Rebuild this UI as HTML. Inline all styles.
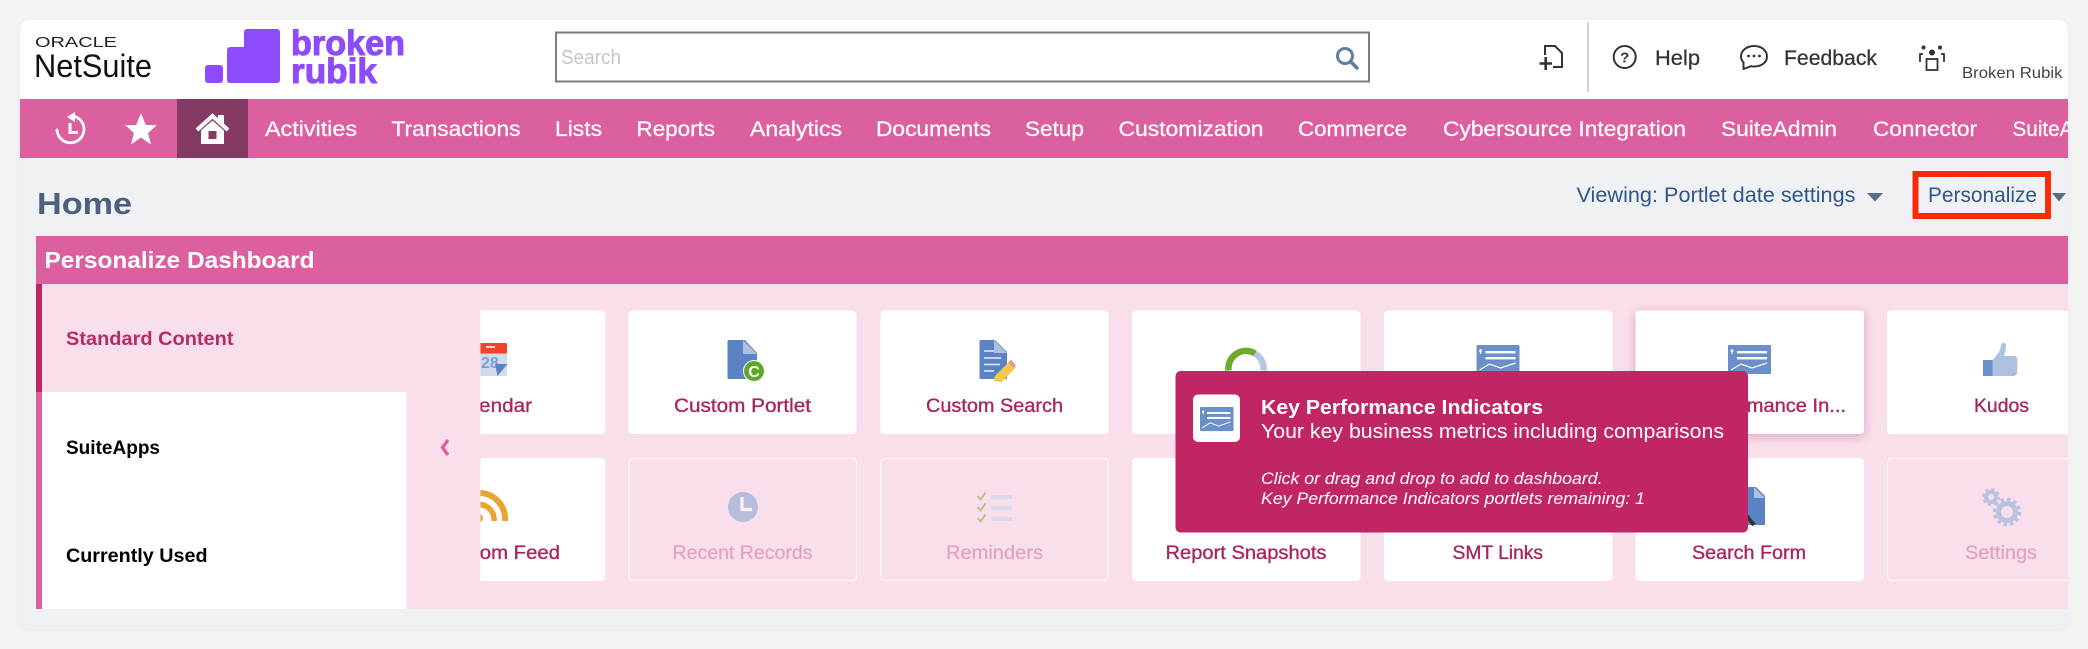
<!DOCTYPE html>
<html lang="en"><head><meta charset="utf-8"><title>NetSuite Personalize Dashboard</title>
<style>
html,body{margin:0;padding:0;background:#f4f4f5;width:2088px;height:649px;overflow:hidden}
svg{display:block;font-family:"Liberation Sans",Arial,sans-serif;filter:blur(.35px)}
.nav{font-size:21px;fill:#fff;stroke:#fff;stroke-width:.25}
.lb{font-size:19.5px;fill:#aa2460;stroke:#aa2460;stroke-width:.35;text-anchor:start}
.dis{font-size:19.5px;fill:#e2a3c0;stroke:#e2a3c0;stroke-width:.25}
.tab{font-size:19px;font-weight:bold}
.top{font-size:21.5px;fill:#333;stroke:#333;stroke-width:.25}
.view{font-size:21.5px;fill:#2f5787}
.tip{fill:#fff}
</style></head><body>
<svg width="2088" height="649" viewBox="0 0 2088 649" xmlns="http://www.w3.org/2000/svg">
<defs>
<clipPath id="cardClip"><rect x="20" y="20" width="2048" height="609" rx="10"/></clipPath>
<clipPath id="slide"><rect x="480.5" y="290" width="1587.5" height="310"/></clipPath>
<filter id="sh" x="-10%" y="-15%" width="120%" height="130%"><feDropShadow dx="0" dy="2" stdDeviation="5" flood-color="#b02a66" flood-opacity=".35"/></filter>
<filter id="outer" x="-2%" y="-5%" width="104%" height="110%"><feDropShadow dx="0" dy="1" stdDeviation="3" flood-color="#000" flood-opacity=".05"/></filter>
<g id="kpi">
<rect x="0" y="0" width="43" height="29" rx="1" fill="#6b90c9"/>
<rect x="9" y="6" width="30" height="2.4" fill="#fff"/><rect x="9" y="12" width="30" height="2.4" fill="#fff"/>
<path d="M4 9V5M2.6 6.4 4 4.6 5.4 6.4" stroke="#fff" stroke-width="1.2" fill="none"/>
<path d="M3 25 13 19 24 23 39 18" stroke="#fff" stroke-width="1.2" fill="none"/>
</g>
</defs>
<rect width="2088" height="649" fill="#f4f4f5"/>
<rect x="20" y="20" width="2048" height="609" rx="10" fill="#eff1f4" filter="url(#outer)"/>
<g clip-path="url(#cardClip)">
<!-- top bar -->
<rect x="20" y="20" width="2048" height="79" fill="#fff"/>
<text x="35" y="47" font-size="14.5" fill="#222" textLength="82" lengthAdjust="spacingAndGlyphs">ORACLE</text>
<text x="34" y="77" font-size="32.5" fill="#111" textLength="118" lengthAdjust="spacingAndGlyphs">NetSuite</text>
<!-- broken rubik logo -->
<rect x="205" y="65" width="18" height="18" rx="3" fill="#8d4bfb"/>
<path d="M227 50a3 3 0 0 1 3-3H244V32a3 3 0 0 1 3-3H277a3 3 0 0 1 3 3V80a3 3 0 0 1-3 3H230a3 3 0 0 1-3-3Z" fill="#8d4bfb"/>
<text x="291" y="55" font-size="35.500" font-weight="bold" fill="#8d4bfb" stroke="#8d4bfb" stroke-width="1" textLength="114" lengthAdjust="spacingAndGlyphs">broken</text>
<text x="291" y="83" font-size="35.500" font-weight="bold" fill="#8d4bfb" stroke="#8d4bfb" stroke-width="1" textLength="86" lengthAdjust="spacingAndGlyphs">rubik</text>
<!-- search -->
<rect x="556" y="32.5" width="813" height="49" fill="#fff" stroke="#7d7d7d" stroke-width="2"/>
<text x="561" y="64" font-size="20.500" fill="#c6c6c6" textLength="60" lengthAdjust="spacingAndGlyphs">Search</text>
<circle cx="1345" cy="56" r="7.5" fill="none" stroke="#5f7f9f" stroke-width="3"/>
<path d="M1350.5 61.5 1357 68" stroke="#5f7f9f" stroke-width="3.6" stroke-linecap="round"/>
<!-- right icons -->
<path d="M1545 55V46H1555L1562 53V67H1553" fill="none" stroke="#333" stroke-width="2"/>
<path d="M1539.500 63.500H1552M1545.700 57V70" stroke="#333" stroke-width="2.600" fill="none"/>
<rect x="1587" y="22" width="2" height="70" fill="#d2d2d2"/>
<circle cx="1624.700" cy="57" r="11" fill="none" stroke="#333" stroke-width="2"/>
<text x="1624.700" y="62.500" font-size="15" font-weight="bold" fill="#333" text-anchor="middle">?</text>
<text class="top" x="1655" y="65" textLength="45" lengthAdjust="spacingAndGlyphs">Help</text>
<path d="M1743.500 69V62.500C1741.600 60.500 1741 58.500 1741 56.500C1741 50.500 1747 46 1754 46C1761.500 46 1767 50.500 1767 56.500C1767 62.500 1761.500 66.500 1754 66.500C1753 66.500 1752 66.400 1751 66.200Z" fill="none" stroke="#333" stroke-width="2" stroke-linejoin="round"/>
<circle cx="1748.500" cy="56" r="1.400" fill="#333"/><circle cx="1754" cy="56" r="1.400" fill="#333"/><circle cx="1759.500" cy="56" r="1.400" fill="#333"/>
<text class="top" x="1784" y="65" textLength="93" lengthAdjust="spacingAndGlyphs">Feedback</text>
<circle cx="1923.500" cy="47.500" r="2" fill="#333"/><circle cx="1940" cy="47.500" r="2" fill="#333"/><circle cx="1932" cy="52.500" r="3" fill="#333"/>
<path d="M1923 54H1920V62M1941 54H1944V62" fill="none" stroke="#333" stroke-width="1.800"/>
<rect x="1926.500" y="59" width="11" height="11" fill="none" stroke="#333" stroke-width="1.800"/>
<text x="1962" y="78" font-size="16" fill="#444" textLength="100.500" lengthAdjust="spacingAndGlyphs">Broken Rubik</text>
<!-- nav -->
<rect x="20" y="99" width="2048" height="59" fill="#dc609f"/>
<rect x="177" y="99" width="71" height="59" fill="#843a62"/>
<path d="M73 116A13.500 13.500 0 1 1 57 130" fill="none" stroke="#fff" stroke-width="2.800" stroke-linecap="round"/>
<path d="M67 117 75 112V122Z" fill="#fff"/>
<path d="M70 123V132.500H78" fill="none" stroke="#fff" stroke-width="3"/>
<path d="M141 113 145.800 125H157L148 133 151 144.500 141 137.500 131 144.500 134 133 125 125H136.200Z" fill="#fff"/>
<path d="M197 130 212.500 116 228 130" fill="none" stroke="#fff" stroke-width="4"/>
<path d="M218 115H224V124L218 119Z" fill="#fff"/>
<path d="M201 130.500 212.500 120.500 224 130.500V144H201Z" fill="#fff"/>
<rect x="208.500" y="131" width="8" height="8" fill="#843a62"/>
<g class="nav">
<text x="265" y="136" textLength="92" lengthAdjust="spacingAndGlyphs">Activities</text>
<text x="391.500" y="136" textLength="129" lengthAdjust="spacingAndGlyphs">Transactions</text>
<text x="555" y="136" textLength="47" lengthAdjust="spacingAndGlyphs">Lists</text>
<text x="636.500" y="136" textLength="78.500" lengthAdjust="spacingAndGlyphs">Reports</text>
<text x="750" y="136" textLength="92" lengthAdjust="spacingAndGlyphs">Analytics</text>
<text x="876" y="136" textLength="115" lengthAdjust="spacingAndGlyphs">Documents</text>
<text x="1025" y="136" textLength="59" lengthAdjust="spacingAndGlyphs">Setup</text>
<text x="1118.500" y="136" textLength="145" lengthAdjust="spacingAndGlyphs">Customization</text>
<text x="1298" y="136" textLength="109" lengthAdjust="spacingAndGlyphs">Commerce</text>
<text x="1443" y="136" textLength="243" lengthAdjust="spacingAndGlyphs">Cybersource Integration</text>
<text x="1721" y="136" textLength="116" lengthAdjust="spacingAndGlyphs">SuiteAdmin</text>
<text x="1873" y="136" textLength="104" lengthAdjust="spacingAndGlyphs">Connector</text>
<text x="2012.500" y="136" textLength="130" lengthAdjust="spacingAndGlyphs">SuiteAnalytics</text>
</g>
<!-- page head -->
<text x="37" y="214" font-size="31" font-weight="bold" fill="#4c5f7e" textLength="95" lengthAdjust="spacingAndGlyphs">Home</text>
<text class="view" x="1576.500" y="202" textLength="279" lengthAdjust="spacingAndGlyphs">Viewing: Portlet date settings</text>
<path d="M1867 193H1883L1875 201.500Z" fill="#5a6b85"/>
<rect x="1915.500" y="174" width="132.500" height="42" fill="none" stroke="#fa2a08" stroke-width="6"/>
<text class="view" x="1928" y="202" textLength="109" lengthAdjust="spacingAndGlyphs">Personalize</text>
<path d="M2052 193H2066L2059 201.500Z" fill="#5a6b85"/>
<!-- portlet -->
<rect x="36" y="236" width="2032" height="48" fill="#dc609f"/>
<text x="44.500" y="268" font-size="23" font-weight="bold" fill="#fff" textLength="270" lengthAdjust="spacingAndGlyphs">Personalize Dashboard</text>
<rect x="36" y="284" width="2032" height="325" fill="#f8dfeb"/>
<rect x="36" y="284" width="6" height="108" fill="#c0245f"/>
<rect x="36" y="392" width="6" height="217" fill="#dc609f"/>
<rect x="42" y="392" width="364.500" height="217" fill="#fff"/>
<text class="tab" x="66" y="345" fill="#b92a66" textLength="167.500" lengthAdjust="spacingAndGlyphs">Standard Content</text>
<text class="tab" x="66" y="454" fill="#000" textLength="94" lengthAdjust="spacingAndGlyphs">SuiteApps</text>
<text class="tab" x="66" y="562" fill="#000" textLength="141.500" lengthAdjust="spacingAndGlyphs">Currently Used</text>
<path d="M448 440 442.500 447.500 448 455" fill="none" stroke="#dc609f" stroke-width="3.400"/>
<g clip-path="url(#slide)">
<!-- cards row 1 -->
<rect x="376" y="310.500" width="229" height="123.500" rx="4" fill="#fff"/>
<rect x="628.500" y="310.500" width="228" height="123.500" rx="4" fill="#fff"/>
<rect x="880.500" y="310.500" width="228" height="123.500" rx="4" fill="#fff"/>
<rect x="1132" y="310.500" width="228.500" height="123.500" rx="4" fill="#fff"/>
<rect x="1384" y="310.500" width="228.500" height="123.500" rx="4" fill="#fff"/>
<rect x="1635.500" y="310.500" width="228.500" height="123.500" rx="4" fill="#fff" filter="url(#sh)"/>
<rect x="1887" y="310.500" width="229" height="123.500" rx="4" fill="#fff"/>
<!-- cards row 2 -->
<rect x="376" y="458" width="229" height="123" rx="4" fill="#fff"/>
<rect x="629" y="458.500" width="227.500" height="122" rx="4" fill="none" stroke="#fdf0f6" stroke-width="1.500"/>
<rect x="881" y="458.500" width="227" height="122" rx="4" fill="none" stroke="#fdf0f6" stroke-width="1.500"/>
<rect x="1132" y="458" width="228.500" height="123" rx="4" fill="#fff"/>
<rect x="1384" y="458" width="228.500" height="123" rx="4" fill="#fff"/>
<rect x="1635.500" y="458" width="228.500" height="123" rx="4" fill="#fff"/>
<rect x="1887.500" y="458.500" width="229" height="122" rx="4" fill="none" stroke="#fdf0f6" stroke-width="1.500"/>
<!-- calendar icon -->
<rect x="460" y="353" width="47" height="23" fill="#cfdcef"/>
<rect x="460" y="343" width="47" height="10.500" rx="1" fill="#f0432a"/>
<rect x="486" y="346" width="9" height="2" fill="#f7d9d0"/>
<text x="481" y="368" font-size="16" font-weight="bold" fill="#7f9fd0">28</text>
<path d="M495 364H507.500L497.500 376Z" fill="#5b82c4"/>
<!-- rss -->
<path d="M479 493A26 26 0 0 1 505 521" fill="none" stroke="#e9a530" stroke-width="6"/>
<path d="M479 504.500A15 15 0 0 1 494 521" fill="none" stroke="#e9a530" stroke-width="5.500"/>
<circle cx="479" cy="518" r="4" fill="#e9a530"/>
<!-- custom portlet icon -->
<path d="M729 340H745L757 353V379H729A1.500 1.500 0 0 1 727.500 377.500V341.500A1.500 1.500 0 0 1 729 340Z" fill="#5b82c4"/>
<path d="M743 340 757 354H743Z" fill="#aec0e0"/>
<circle cx="754" cy="371" r="11" fill="#fff"/><circle cx="754" cy="371" r="10" fill="#5fa82a"/>
<text x="754" y="377" font-size="16" font-weight="bold" fill="#fff" text-anchor="middle">C</text>
<!-- custom search icon -->
<path d="M981 340H995L1007 352V379H981A1.500 1.500 0 0 1 979.500 377.500V341.500A1.500 1.500 0 0 1 981 340Z" fill="#5b82c4"/>
<path d="M994 340 1007 353H994Z" fill="#aec0e0"/>
<path d="M984 351H994M984 358H1001M984 364.500H1000M984 371H994" stroke="#d6e0f2" stroke-width="1.800"/>
<path d="M1010 361 1016 367 1002 382 993.500 381 995 376Z" fill="#f3c94a"/>
<path d="M1008 363 1011 359.500 1016 365 1013.500 368Z" fill="#e99b8a"/>
<!-- gauge -->
<path d="M1228.500 370.500A17.500 17.500 0 0 1 1255 353.500" fill="none" stroke="#6faa2e" stroke-width="6.500"/>
<path d="M1255 353.500A17.500 17.500 0 0 1 1263.500 370.500" fill="none" stroke="#b5c7e2" stroke-width="6.500"/>
<!-- kpi -->
<use href="#kpi" x="1476.500" y="345"/>
<use href="#kpi" x="1728" y="345"/>
<!-- kudos -->
<rect x="1983" y="360" width="9.500" height="16" fill="#6b90c9"/>
<path d="M1992.500 360C1997 355 2000 352 2001 345.500C2001.500 342 2006 341.500 2006 346C2006 350 2005 353 2004 356H2014C2016 356 2018 358 2017.500 360L2017 373C2017 375 2015 376 2013.500 376H1992.500Z" fill="#aec0e0"/>
<!-- clock -->
<circle cx="743" cy="507" r="15" fill="#b7bedd"/>
<path d="M742 497V509.500H752" fill="none" stroke="#fdeff5" stroke-width="3.200"/>
<!-- reminders -->
<path d="M977.500 496 980.500 499.500 985.500 492.500M977.500 507 980.500 510.500 985.500 503.500M977.500 518 980.500 521.500 985.500 514.500" fill="none" stroke="#c0c28e" stroke-width="2"/>
<rect x="991" y="495" width="21" height="4" fill="#dcd9ea"/><rect x="991" y="506" width="21" height="4" fill="#dcd9ea"/><rect x="991" y="517" width="21" height="4" fill="#dcd9ea"/>
<!-- search form doc -->
<path d="M1730 487H1756L1765 496V525H1730Z" fill="#5b82c4"/>
<path d="M1754 487 1765 498H1754Z" fill="#aec0e0"/>
<path d="M1745 514 1754 525" stroke="#333" stroke-width="4"/>
<!-- gears -->
<circle cx="1991" cy="497" r="5" fill="none" stroke="#b9c3e0" stroke-width="4"/>
<circle cx="1991" cy="497" r="7.500" fill="none" stroke="#b9c3e0" stroke-width="3" stroke-dasharray="3 2.900"/>
<circle cx="2007" cy="512" r="8.500" fill="none" stroke="#b9c3e0" stroke-width="5"/>
<circle cx="2007" cy="512" r="12.500" fill="none" stroke="#b9c3e0" stroke-width="3.500" stroke-dasharray="3.500 3"/>
<!-- labels -->
<g class="lb">
<text x="448" y="412" textLength="84" lengthAdjust="spacingAndGlyphs">Calendar</text>
<text x="674" y="412" textLength="137" lengthAdjust="spacingAndGlyphs">Custom Portlet</text>
<text x="926" y="412" textLength="137" lengthAdjust="spacingAndGlyphs">Custom Search</text>
<text x="1652" y="412" textLength="194" lengthAdjust="spacingAndGlyphs">Key Performance In...</text>
<text x="1974" y="412" textLength="55" lengthAdjust="spacingAndGlyphs">Kudos</text>
<text x="438" y="559" textLength="122" lengthAdjust="spacingAndGlyphs">Custom Feed</text>
<text x="1165.500" y="559" textLength="161" lengthAdjust="spacingAndGlyphs">Report Snapshots</text>
<text x="1452.500" y="559" textLength="90.500" lengthAdjust="spacingAndGlyphs">SMT Links</text>
<text x="1692" y="559" textLength="114" lengthAdjust="spacingAndGlyphs">Search Form</text>
</g>
<g class="dis">
<text x="672.500" y="559" textLength="140" lengthAdjust="spacingAndGlyphs">Recent Records</text>
<text x="946" y="559" textLength="97" lengthAdjust="spacingAndGlyphs">Reminders</text>
<text x="1965" y="559" textLength="72" lengthAdjust="spacingAndGlyphs">Settings</text>
</g>
</g>
<!-- tooltip -->
<rect x="1175.500" y="371" width="572.500" height="161.500" rx="5" fill="#c02564"/>
<rect x="1193" y="394.500" width="47" height="47.500" rx="5" fill="#fff"/>
<g transform="translate(1200,407) scale(.78,.83)"><use href="#kpi"/></g>
<text class="tip" x="1261" y="414" font-size="20" font-weight="bold" textLength="282" lengthAdjust="spacingAndGlyphs">Key Performance Indicators</text>
<text class="tip" x="1261" y="438" font-size="20" textLength="463" lengthAdjust="spacingAndGlyphs">Your key business metrics including comparisons</text>
<text class="tip" x="1261" y="484" font-size="17" font-style="italic" textLength="341.500" lengthAdjust="spacingAndGlyphs">Click or drag and drop to add to dashboard.</text>
<text class="tip" x="1261" y="504" font-size="17" font-style="italic" textLength="384" lengthAdjust="spacingAndGlyphs">Key Performance Indicators portlets remaining: 1</text>
</g>
</svg>
</body></html>
